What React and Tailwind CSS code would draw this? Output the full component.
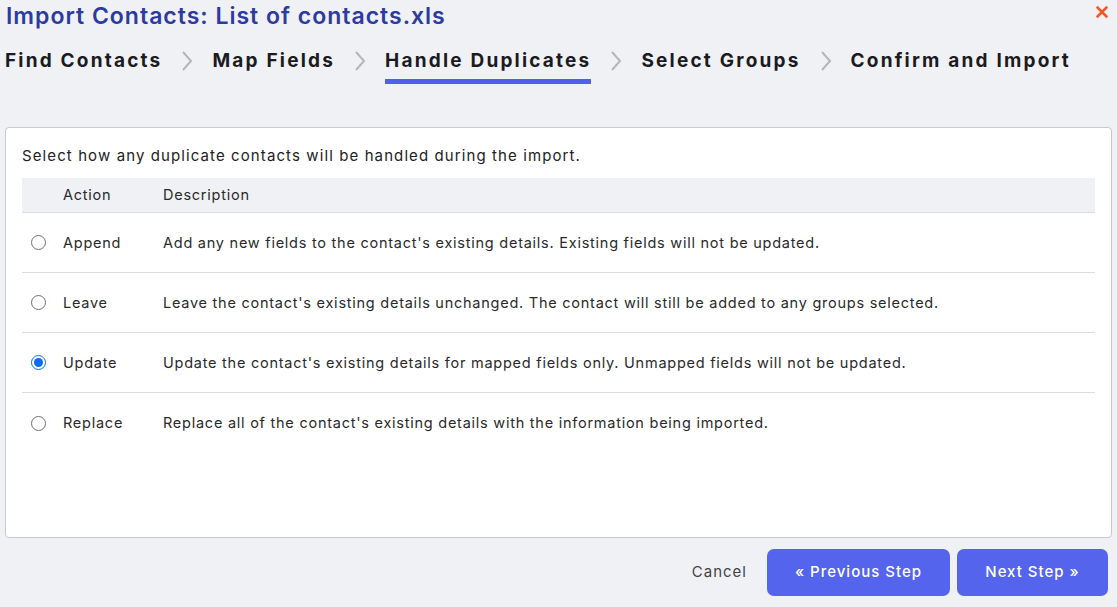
import React, { useState } from 'react';

const steps = ['Find Contacts', 'Map Fields', 'Handle Duplicates', 'Select Groups', 'Confirm and Import'];

const options = [
  { name: 'Append', desc: "Add any new fields to the contact's existing details. Existing fields will not be updated." },
  { name: 'Leave', desc: "Leave the contact's existing details unchanged. The contact will still be added to any groups selected." },
  { name: 'Update', desc: "Update the contact's existing details for mapped fields only. Unmapped fields will not be updated." },
  { name: 'Replace', desc: "Replace all of the contact's existing details with the information being imported." },
];

function Chevron() {
  return (
    <svg width="12" height="22" viewBox="0 0 12 22" className="mx-[19px] shrink-0">
      <path d="M2 2 L10 11 L2 20" fill="none" stroke="#b4b6bb" strokeWidth="2" />
    </svg>
  );
}

function Radio({ checked }) {
  return (
    <span
      className={
        'flex h-[15px] w-[15px] items-center justify-center rounded-full border bg-white ' +
        (checked ? 'border-[#0b6cf0] border-[1.5px]' : 'border-[#707070]')
      }
    >
      {checked && <span className="h-[9px] w-[9px] rounded-full bg-[#0b6cf0]" />}
    </span>
  );
}

export default function App() {
  const [choice, setChoice] = useState('Update');

  return (
    <div
      className="flex h-[607px] w-[1117px] flex-col bg-[#f0f1f5] text-[#222]"
      style={{ fontFamily: 'Inter, "Noto Sans", sans-serif' }}
    >
      <div className="flex items-start justify-between pl-[6px] pr-[9px] pt-[1px]">
        <h1 className="text-[23px] font-semibold leading-[30px] tracking-[1px] text-[#2d3a9f]">
          Import Contacts: List of contacts.xls
        </h1>
        <svg width="12" height="12" viewBox="0 0 12 12" className="mt-[5px]">
          <path d="M1.5 1.5 L10.5 10.5 M10.5 1.5 L1.5 10.5" stroke="#f05a2a" strokeWidth="2.6" strokeLinecap="round" />
        </svg>
      </div>

      <div className="mt-[15px] flex items-start pl-[5px]">
        {steps.map((s, i) => (
          <React.Fragment key={s}>
            {i > 0 && <div className="pt-[4px]"><Chevron /></div>}
            <div className="flex flex-col">
              <span className="text-[19px] font-bold leading-[30px] tracking-[2.2px] text-[#1b1b1f]">{s}</span>
              {s === 'Handle Duplicates' && <span className="mt-[3px] h-[5px] w-full bg-[#4f5fe9]" />}
            </div>
          </React.Fragment>
        ))}
      </div>

      <div className="mx-[5px] mt-auto flex h-[411px] flex-col rounded-[4px] border border-[#c9c9cc] bg-white px-[16px] pt-[18px]">
        <p className="text-[15px] leading-[20px] tracking-[1.1px] text-[#222]">
          Select how any duplicate contacts will be handled during the import.
        </p>
        <div className="mt-[12px] flex flex-col text-[14.5px] tracking-[0.75px] text-[#2a2a2a]">
          <div className="flex h-[35px] items-center border-b border-[#dcdde0] bg-[#f0f1f5]">
            <span className="w-[141px] pl-[41px]">Action</span>
            <span>Description</span>
          </div>
          {options.map((o, i) => (
            <label
              key={o.name}
              className={'flex h-[60px] cursor-pointer items-center ' + (i < options.length - 1 ? 'border-b border-[#dcdde0]' : '')}
              onClick={() => setChoice(o.name)}
            >
              <span className="flex w-[41px] justify-start pl-[9px]">
                <Radio checked={choice === o.name} />
              </span>
              <span className="w-[100px]">{o.name}</span>
              <span>{o.desc}</span>
            </label>
          ))}
        </div>
      </div>

      <div className="flex items-center justify-end gap-[7px] pb-[11px] pr-[9px] pt-[11px]">
        <button className="mr-[13px] text-[15px] tracking-[1px] text-[#444]">Cancel</button>
        <button className="h-[47px] w-[183px] rounded-[7px] bg-[#5464ec] text-[15px] font-medium tracking-[1px] text-white">
          « Previous Step
        </button>
        <button className="h-[47px] w-[151px] rounded-[7px] bg-[#5464ec] text-[15px] font-medium tracking-[1px] text-white">
          Next Step »
        </button>
      </div>
    </div>
  );
}
